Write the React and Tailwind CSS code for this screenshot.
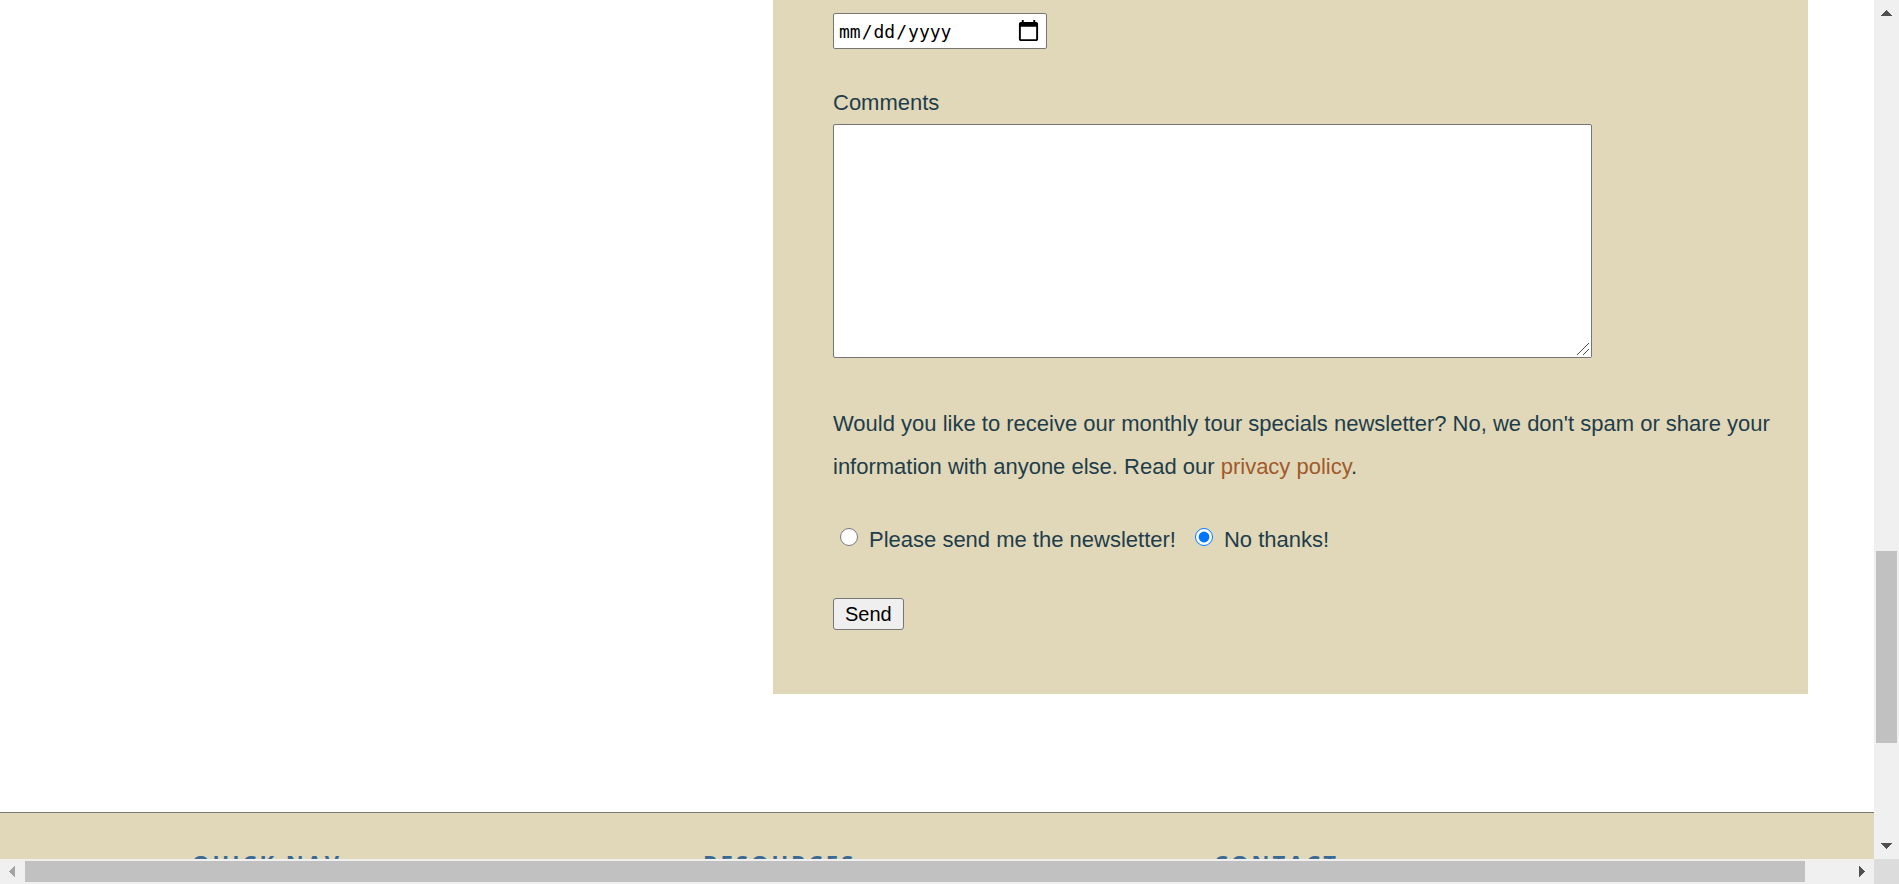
function ScrollArrow({ direction }) {
  const points = {
    up: '0,6 5.5,0 11,6',
    down: '0,0 11,0 5.5,6',
    left: '6,0 6,11 0,5.5',
    right: '0,0 6,5.5 0,11',
  }[direction];
  const vertical = direction === 'up' || direction === 'down';
  return (
    <svg
      aria-hidden="true"
      width={vertical ? 11 : 6}
      height={vertical ? 6 : 11}
      shapeRendering="crispEdges"
    >
      <polygon points={points} fill="currentColor" />
    </svg>
  );
}

function VerticalScrollbar() {
  return (
    <div className="flex flex-col items-center bg-[#f0f0f0] text-[#505050]">
      <div className="flex h-[25px] items-center">
        <ScrollArrow direction="up" />
      </div>
      <div className="flex w-full flex-1 flex-col px-0.5">
        <div className="flex-[526]" />
        <div className="flex-[192] bg-[#c1c1c1]" />
        <div className="flex-[91]" />
      </div>
      <div className="flex h-[25px] items-start pt-[9px]">
        <ScrollArrow direction="down" />
      </div>
    </div>
  );
}

function HorizontalScrollbar() {
  return (
    <div className="flex items-center bg-[#f0f0f0] text-[#505050]">
      <div className="flex w-[25px] pl-[9px] text-[#a3a3a3]">
        <ScrollArrow direction="left" />
      </div>
      <div className="flex h-full flex-1 py-0.5">
        <div className="flex-[1780] bg-[#c1c1c1]" />
        <div className="flex-[44]" />
      </div>
      <div className="flex w-[25px] justify-center">
        <ScrollArrow direction="right" />
      </div>
    </div>
  );
}

function ContactForm() {
  return (
    <form className="bg-[#e1d8b9] pt-[13px] pr-9 pb-16 pl-[60px] text-[22px] leading-[43px] text-[#1f3d4a]">
      <input
        type="date"
        aria-label="Date"
        className="block h-9 w-[214px] rounded-[2px] border border-[#767676] bg-white pr-[5px] pl-1 font-['DejaVu_Sans_Mono',monospace] text-[18px] text-black [&::-webkit-calendar-picker-indicator]:size-[25px] [&::-webkit-calendar-picker-indicator]:p-0"
      />
      <label htmlFor="comments" className="mt-8 block">
        Comments
      </label>
      <div className="relative w-fit max-w-full">
        <textarea
          id="comments"
          className="block h-[234px] w-[759px] max-w-full resize rounded-[2px] border border-[#767676] bg-white"
        />
        <svg
          aria-hidden="true"
          width="16"
          height="16"
          className="pointer-events-none absolute right-px bottom-px bg-white"
        >
          <path d="M2 14L14 2M8 14L14 8" stroke="#505050" strokeWidth="1" />
        </svg>
      </div>
      <p className="mt-11">
        Would you like to receive our monthly tour specials newsletter? No, we don't spam or share
        your information with anyone else. Read our{' '}
        <a href="#privacy" className="text-[#a05a2c]">
          privacy policy
        </a>
        .
      </p>
      <div className="mt-[30px] flex">
        <label className="flex">
          <input
            type="radio"
            name="newsletter"
            value="yes"
            className="mt-2.5 mr-[11px] ml-[7px] size-[18px]"
          />
          Please send me the newsletter!
        </label>
        <label className="ml-3 flex">
          <input
            type="radio"
            name="newsletter"
            value="no"
            defaultChecked
            className="mt-2.5 mr-[11px] ml-[7px] size-[18px]"
          />
          No thanks!
        </label>
      </div>
      <button
        type="button"
        className="mt-[37px] block h-8 rounded-[3px] border border-[#767676] bg-[#efefef] px-[11px] text-[20px] leading-7 text-black"
      >
        Send
      </button>
    </form>
  );
}

export default function App() {
  return (
    <div className="grid h-screen grid-cols-[minmax(0,1fr)_25px] grid-rows-[minmax(0,1fr)_25px] bg-white font-['Liberation_Sans',Arial,sans-serif]">
      <div className="overflow-hidden">
        <main className="grid grid-cols-[773fr_1035fr] pr-[66px] pb-[118px]">
          <div />
          <ContactForm />
        </main>
        <footer className="grid grid-cols-3 border-t border-[#767676] bg-[#e1d8b9] pt-[33px] pr-[149px] pb-9 pl-48 font-['Open_Sans',sans-serif] text-[22px] leading-8 font-bold tracking-[3px] text-[#3a6a94]">
          <h2>QUICK NAV</h2>
          <h2>RESOURCES</h2>
          <h2>CONTACT</h2>
        </footer>
      </div>
      <VerticalScrollbar />
      <HorizontalScrollbar />
      <div className="bg-[#dcdcdc]" />
    </div>
  );
}
